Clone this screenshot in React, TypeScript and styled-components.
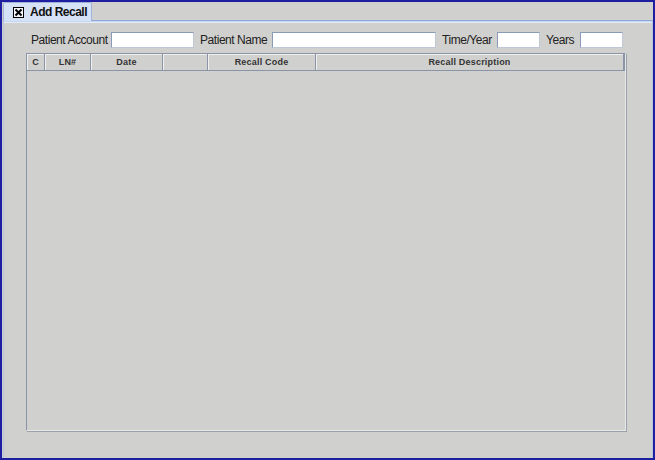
import styled, { createGlobalStyle } from 'styled-components';

const Global = createGlobalStyle`
    html, body {
        margin: 0;
        padding: 0;
        background: #1e1ea0;
    }
    body {
        font-family: "Liberation Sans", Arial, sans-serif;
    }
`;

const columns = [
    { title: 'C', width: 18 },
    { title: 'LN#', width: 46 },
    { title: 'Date', width: 72 },
    { title: '', width: 45 },
    { title: 'Recall Code', width: 108 },
    { title: 'Recall Description', width: 0 },
];

export default function App() {
    return (
        <>
            <Global />
            <Frame>
                <TabStrip>
                    <Tab>
                        <CloseBox>
                            <svg width="9" height="9" viewBox="0 0 9 9">
                                <path d="M1.5 1.5 L7.5 7.5 M7.5 1.5 L1.5 7.5" stroke="#000" strokeWidth="2" />
                            </svg>
                        </CloseBox>
                        <TabTitle>Add Recall</TabTitle>
                    </Tab>
                </TabStrip>
                <Panel>
                    <FormRow>
                        <Label $w={76}>Patient Account</Label>
                        <Input $w={83} />
                        <Label $w={68}>Patient Name</Label>
                        <Input $w={164} />
                        <Label $w={51}>Time/Year</Label>
                        <Input $w={43} />
                        <Label $w={30}>Years</Label>
                        <Input $w={43} />
                    </FormRow>
                    <Table>
                        <Header>
                            {columns.map((c, i) => (
                                <HeadCell key={i} $w={c.width}>
                                    {c.title}
                                </HeadCell>
                            ))}
                        </Header>
                        <Body />
                    </Table>
                </Panel>
            </Frame>
        </>
    );
}

const Frame = styled.div`
    width: 651px;
    height: 456px;
    margin: 2px;
    background: #d0d0ce;
    display: flex;
    flex-direction: column;
`;

const TabStrip = styled.div`
    height: 18px;
    display: flex;
    padding-left: 1px;
    align-items: flex-end;
`;

const Tab = styled.div`
    width: 89px;
    height: 19px;
    box-sizing: border-box;
    background: #d6e2f6;
    border: 1px solid #9fb4d8;
    border-bottom: none;
    border-radius: 2px 2px 0 0;
    display: flex;
    align-items: center;
    padding-left: 9px;
    gap: 6px;
    margin-bottom: -1px;
    position: relative;
    z-index: 1;
    white-space: nowrap;
`;

const CloseBox = styled.div`
    width: 11px;
    height: 11px;
    flex-shrink: 0;
    box-sizing: border-box;
    border: 1px solid #000;
    background: #f4f6fa;
    display: flex;
    align-items: center;
    justify-content: center;
`;

const TabTitle = styled.span`
    font-size: 12px;
    font-weight: bold;
    letter-spacing: -0.5px;
    color: #111;
`;

const Panel = styled.div`
    flex: 1;
    margin: 0 0 0 1px;
    border-top: 1px solid #8fa8d4;
    box-shadow: inset 0 1px 0 #c4d6f2, inset 0 2px 0 #e4ecf8;
    border-left: 1px solid #b8c4dc;
    border-right: 1px solid #b8c4dc;
    display: flex;
    flex-direction: column;
    padding: 10px 0 0 22px;
`;

const FormRow = styled.div`
    display: flex;
    align-items: center;
    height: 17px;
    padding-left: 5px;
    margin-bottom: 5px;
`;

const Label = styled.span<{ $w: number }>`
    width: ${({ $w }) => $w}px;
    font-size: 12px;
    letter-spacing: -0.45px;
    white-space: nowrap;
    color: #222;
    margin-right: 4px;
    margin-left: 6px;
    &:first-child {
        margin-left: 0;
    }
`;

const Input = styled.div<{ $w: number }>`
    width: ${({ $w }) => $w}px;
    height: 16px;
    box-sizing: border-box;
    background: #fff;
    border: 1px solid #8a9bb8;
    border-right-color: #c0c8d8;
    border-bottom-color: #c0c8d8;
`;

const Table = styled.div`
    width: 600px;
    height: 378px;
    box-sizing: border-box;
    border: 1px solid #8a94a8;
    border-right-color: #e8e8e4;
    border-bottom-color: #e8e8e4;
    box-shadow: 1px 1px 0 #9aa0ac;
    display: flex;
    flex-direction: column;
`;

const Header = styled.div`
    height: 17px;
    display: flex;
    box-sizing: border-box;
    border-bottom: 1px solid #8a94a8;
`;

const HeadCell = styled.div<{ $w: number }>`
    ${({ $w }) => ($w ? `width: ${$w}px;` : 'flex: 1;')}
    box-sizing: border-box;
    border-right: 1px solid #8a94a8;
    box-shadow: inset 1px 1px 0 #f0f0ee;
    font-size: 9px;
    font-weight: bold;
    letter-spacing: 0.2px;
    color: #333;
    display: flex;
    align-items: center;
    justify-content: center;
    &:last-child {
        border-right: 2px solid #8a94a8;
    }
`;

const Body = styled.div`
    flex: 1;
    background: #d0d0ce;
`;
